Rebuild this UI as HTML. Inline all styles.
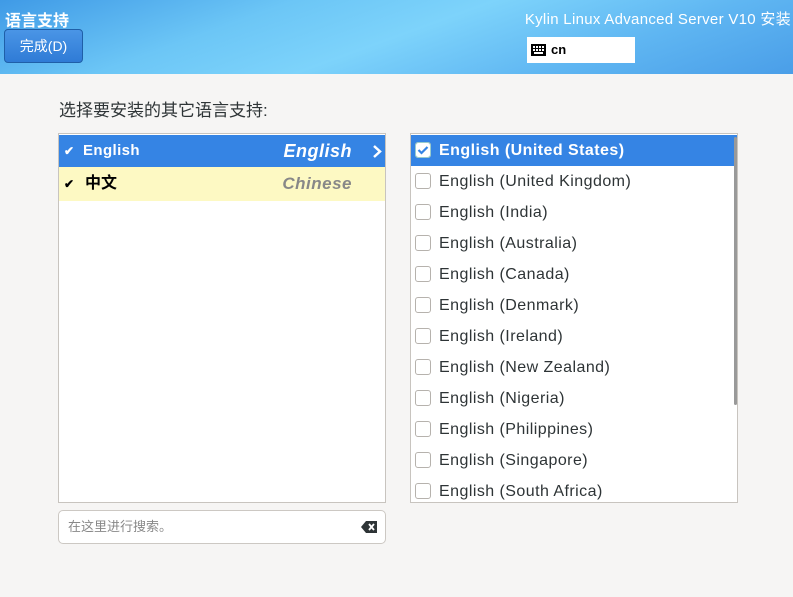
<!DOCTYPE html><html><head><meta charset="utf-8"><style>
body{margin:0;width:793px;height:597px;background:#f6f5f4;font-family:"Liberation Sans","Noto Sans CJK SC",sans-serif;position:relative;overflow:hidden}
.hdr{position:absolute;left:0;top:0;width:793px;height:74px;background:linear-gradient(160deg,#3f9ae6 0%,#6cc6f6 30%,#7dd3fb 50%,#5fb6f2 75%,#4a9ee8 100%)}
.t{position:absolute;left:5px;top:7px;color:#fff;font-weight:bold;font-size:16px}
.btn{position:absolute;left:4px;top:29px;width:77px;height:32px;border:1px solid #1f5fa8;border-radius:4px;background:linear-gradient(#4a95e6,#2f7bd6);color:#fff;font-size:14px;text-align:center;line-height:32px}
.prod{position:absolute;right:2px;top:8px;color:#fff;font-size:15px;letter-spacing:0.3px}
.kb{position:absolute;left:527px;top:37px;width:108px;height:26px;background:#fff;font-size:13px;font-weight:bold;line-height:26px}
.lbl{position:absolute;left:59px;top:96px;font-size:17px;color:#2e3436}
.box{position:absolute;top:133px;width:326px;height:368px;border:1px solid #c8c4bf;background:#fff}
.row{height:32px;line-height:32px;font-size:15px;position:relative}
.r{height:31px;line-height:31px;font-size:16px;color:#2e3436;padding-left:28px;position:relative;letter-spacing:0.45px}
.r:before{content:"";position:absolute;left:4px;top:7px;width:14px;height:14px;border:1px solid #b6b2ad;border-radius:3px;background:#fff}
.search{position:absolute;left:58px;top:510px;width:326px;height:32px;border:1px solid #ccc8c3;border-radius:5px;background:#fff;font-size:13px;color:#888;line-height:32px}
</style></head><body>
<div class="hdr"></div>
<div class="t">语言支持</div>
<div class="btn">完成(D)</div>
<div class="prod">Kylin Linux Advanced Server V10 安装</div>
<div class="kb"><svg style="position:absolute;left:4px;top:7px" width="15" height="12"><rect x="0" y="0" width="15" height="12" fill="#000"/><g fill="#fff"><rect x="2" y="2" width="2" height="2"/><rect x="5" y="2" width="2" height="2"/><rect x="8" y="2" width="2" height="2"/><rect x="11" y="2" width="2" height="2"/><rect x="2" y="5" width="2" height="2"/><rect x="5" y="5" width="2" height="2"/><rect x="8" y="5" width="2" height="2"/><rect x="11" y="5" width="2" height="2"/><rect x="3" y="8" width="9" height="2"/></g></svg><span style="position:absolute;left:24px">cn</span></div>
<div class="lbl">选择要安装的其它语言支持:</div>
<div class="box" style="left:58px">
 <div class="row" style="background:#3584e4;color:#fff;margin-top:1px;font-weight:bold"><span style="position:absolute;left:5px;font-size:12px">✔</span><span style="position:absolute;left:24px;letter-spacing:0.4px">English</span><span style="position:absolute;right:33px;font-style:italic;font-size:18px;letter-spacing:0.5px">English</span><svg style="position:absolute;right:3px;top:10px" width="10" height="13"><path d="M2 1l6 5.5-6 5.5" stroke="#fff" stroke-width="2.5" fill="none"/></svg></div>
 <div class="row" style="background:#fdf9c3;height:34px;line-height:34px;font-weight:bold"><span style="position:absolute;left:5px;font-size:12px">✔</span><span style="position:absolute;left:26px;font-size:16px">中文</span><span style="position:absolute;right:33px;font-style:italic;font-size:17px;color:#888;letter-spacing:0.5px">Chinese</span></div>
</div>
<div class="box" style="left:410px">
 <div class="r" style="background:#3584e4;color:#fff;font-weight:bold;margin-top:1px">English (United States)<svg style="position:absolute;left:4px;top:7px" width="16" height="16"><rect x=".5" y=".5" width="15" height="15" rx="3" fill="#fff" stroke="#9cc"/><path d="M3.5 8l3 3 6-6" stroke="#3584e4" stroke-width="2.2" fill="none"/></svg></div>
 <div class="r">English (United Kingdom)</div><div class="r">English (India)</div><div class="r">English (Australia)</div><div class="r">English (Canada)</div><div class="r">English (Denmark)</div><div class="r">English (Ireland)</div><div class="r">English (New Zealand)</div><div class="r">English (Nigeria)</div><div class="r">English (Philippines)</div><div class="r">English (Singapore)</div><div class="r">English (South Africa)</div>
 <div style="position:absolute;left:323px;top:3px;width:3px;height:268px;background:#999;border-radius:2px"></div>
</div>
<div class="search"><span style="position:absolute;left:9px">在这里进行搜索。</span><svg style="position:absolute;right:8px;top:10px" width="16" height="12"><path d="M5 0h11v12H5L0 6z" fill="#2e3436"/><path d="M8 3l5 6M13 3l-5 6" stroke="#fff" stroke-width="1.8"/></svg></div>
</body></html>
